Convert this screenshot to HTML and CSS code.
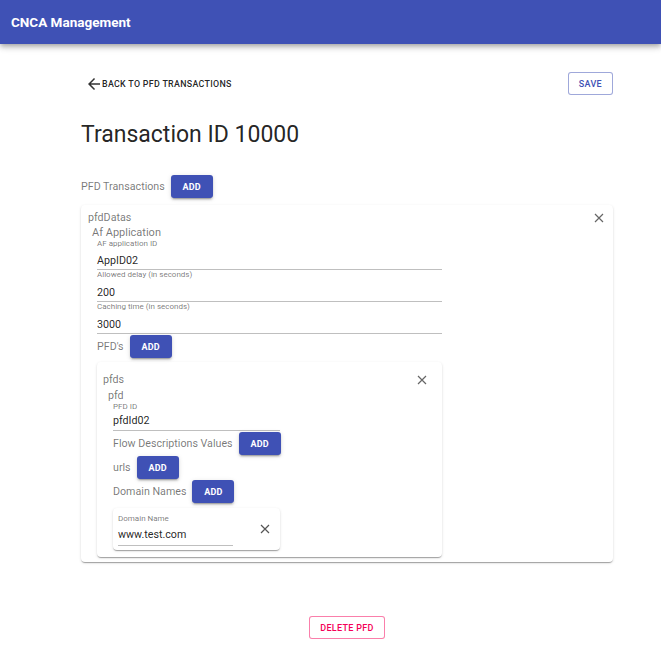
FILE: index.html
```html
<!DOCTYPE html>
<html>
<head>
<meta charset="utf-8">
<link rel="stylesheet" href="styles.css">
</head>
<body>
<header class="appbar">CNCA Management</header>
<main class="page">
  <div class="toolbar">
    <a class="back-link">
      <svg class="back-icon" viewBox="4 4 16 16" width="12" height="12"><path d="M20 11H7.83l5.59-5.59L12 4l-8 8 8 8 1.41-1.41L7.83 13H20v-2z" fill="#333"/></svg>
      <span>Back to PFD Transactions</span>
    </a>
    <button class="btn-outline">Save</button>
  </div>
  <h1 class="title">Transaction ID 10000</h1>
  <div class="row row-top">
    <span class="row-label">PFD Transactions</span>
    <button class="btn-add">Add</button>
  </div>
  <section class="card card-outer">
    <div class="card-head">
      <span class="group-label">pfdDatas</span>
      <svg class="close" viewBox="0 0 10 10" width="10" height="10"><path d="M1 1L9 9M9 1L1 9" stroke="#666" stroke-width="1.2"/></svg>
    </div>
    <div class="sub-head">Af Application</div>
    <div class="fields">
      <label class="field first">
        <span class="field-label">AF application ID</span>
        <span class="field-value">AppID02</span>
      </label>
      <label class="field">
        <span class="field-label">Allowed delay (in seconds)</span>
        <span class="field-value">200</span>
      </label>
      <label class="field">
        <span class="field-label">Caching time (in seconds)</span>
        <span class="field-value">3000</span>
      </label>
      <div class="row row-tight">
        <span class="row-label">PFD's</span>
        <button class="btn-add">Add</button>
      </div>
      <section class="card card-inner">
        <div class="card-head">
          <span class="group-label">pfds</span>
          <svg class="close" viewBox="0 0 10 10" width="10" height="10"><path d="M1 1L9 9M9 1L1 9" stroke="#666" stroke-width="1.2"/></svg>
        </div>
        <div class="sub-head small">pfd</div>
        <div class="pfd-body">
          <label class="field short">
            <span class="field-label">PFD ID</span>
            <span class="field-value">pfdId02</span>
          </label>
          <div class="row row-tight">
            <span class="row-label">Flow Descriptions Values</span>
            <button class="btn-add">Add</button>
          </div>
          <div class="row row-tight">
            <span class="row-label">urls</span>
            <button class="btn-add">Add</button>
          </div>
          <div class="row row-tight">
            <span class="row-label">Domain Names</span>
            <button class="btn-add">Add</button>
          </div>
          <div class="card card-domain">
            <label class="field domain-field">
              <span class="field-label">Domain Name</span>
              <span class="field-value">www.test.com</span>
            </label>
            <svg class="close domain-close" viewBox="0 0 10 10" width="10" height="10"><path d="M1 1L9 9M9 1L1 9" stroke="#555" stroke-width="1.2"/></svg>
          </div>
        </div>
      </section>
    </div>
  </section>
  <div class="footer-actions">
    <button class="btn-outline btn-danger">Delete PFD</button>
  </div>
</main>
</body>
</html>
```

FILE: styles.css
```css
* { box-sizing: border-box; }
html, body { margin: 0; padding: 0; background: #fff; }
body { font-family: Roboto, "Noto Sans", Arial, sans-serif; color: rgba(0,0,0,0.87); }

.appbar {
  height: 44px;
  background: #3f51b5;
  color: #fff;
  font-weight: 700;
  font-size: 13.5px;
  display: flex;
  align-items: center;
  padding-left: 11px;
  box-shadow: 0 2px 4px -1px rgba(0,0,0,.2), 0 4px 5px 0 rgba(0,0,0,.14), 0 1px 10px 0 rgba(0,0,0,.12);
}

.page { margin: 0 48px 0 81px; }

.toolbar {
  display: flex;
  justify-content: space-between;
  align-items: center;
  margin-top: 28px;
  height: 23px;
}
.back-link {
  display: flex;
  align-items: center;
  gap: 2px;
  padding-left: 7px;
  font-size: 8.9px;
  font-weight: 500;
  letter-spacing: 0.3px;
  text-transform: uppercase;
  color: rgba(0,0,0,0.87);
}
.back-icon { display: block; }

button { font-family: inherit; cursor: pointer; }
.btn-outline {
  height: 23px;
  padding: 0 10px;
  background: #fff;
  border: 1px solid rgba(63,81,181,0.5);
  border-radius: 3px;
  color: #3f51b5;
  font-size: 9px;
  font-weight: 500;
  letter-spacing: 0.3px;
  text-transform: uppercase;
}
.btn-danger {
  border-color: rgba(245,0,87,0.5);
  color: #f50057;
  padding: 0 10px;
}

.title {
  margin: 26px 0 0;
  font-size: 23px;
  font-weight: 400;
  line-height: 28px;
}

.row { display: flex; align-items: center; gap: 6px; }
.row-top { margin-top: 26px; }
.row-tight { margin-top: 1px; }
.row-label { font-size: 10.7px; color: rgba(0,0,0,0.54); }

.btn-add {
  height: 23px;
  min-width: 42px;
  padding: 0 8px;
  border: 0;
  border-radius: 3px;
  background: #3f51b5;
  color: #fff;
  font-size: 9px;
  font-weight: 700;
  letter-spacing: 0.2px;
  text-transform: uppercase;
  box-shadow: 0 3px 1px -2px rgba(0,0,0,.2), 0 2px 2px 0 rgba(0,0,0,.14), 0 1px 5px 0 rgba(0,0,0,.12);
}

.card {
  background: #fff;
  border-radius: 4px;
  box-shadow: 0 2px 1px -1px rgba(0,0,0,.2), 0 1px 1px 0 rgba(0,0,0,.14), 0 1px 3px 0 rgba(0,0,0,.12);
}
.card-outer {
  margin-top: 7px;
  padding: 6px 9px 5px 7px;
}
.card-head {
  display: flex;
  justify-content: space-between;
  align-items: center;
  height: 14px;
}
.group-label { font-size: 10.7px; line-height: 14px; color: rgba(0,0,0,0.54); }
.close { display: block; }
.sub-head {
  margin-left: 4px;
  margin-top: 2px;
  font-size: 11px;
  line-height: 12px;
  color: rgba(0,0,0,0.54);
}
.sub-head.small { margin-left: 5px; font-size: 10.7px; line-height: 12px; margin-top: 3px; }

.fields { margin-left: 9px; width: 345px; }

.field {
  display: flex;
  flex-direction: column;
  border-bottom: 1px solid rgba(0,0,0,0.25);
}
.field-label {
  font-size: 8px;
  line-height: 9px;
  color: rgba(0,0,0,0.54);
}
.field-value {
  font-size: 10.7px;
  line-height: 14px;
  padding: 7px 0 1px;
}
.field.first .field-value { padding-top: 6px; }

.card-inner {
  margin-top: 4px;
  padding: 11px 15px 7px 6px;
}
.pfd-body { margin-left: 10px; }
.field.short { width: 167px; }
.field.short .field-value { padding: 3px 0 2px; }

.card-domain {
  margin-top: 5px;
  width: 167px;
  height: 42px;
  padding: 6px 0 0 5px;
  display: flex;
  align-items: flex-start;
  justify-content: space-between;
}
.domain-field { width: 115px; }
.domain-field .field-value { padding: 5px 0 3px; }
.domain-close { margin: 10px 10px 0 0; }

.footer-actions {
  display: flex;
  justify-content: center;
  margin-top: 54px;
}
```
